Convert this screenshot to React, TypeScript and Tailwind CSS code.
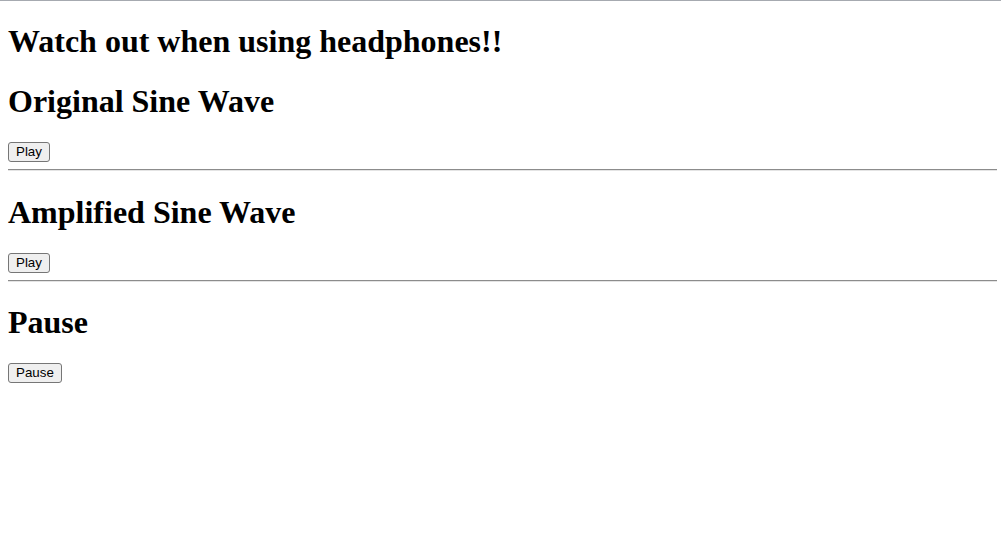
import React from "react";

const serif = "font-['Liberation_Serif','Times_New_Roman',serif]";

function Btn({ label }: { label: string }) {
  return (
    <button className="h-[20px] shrink-0 rounded-[3px] border border-[#767676] bg-[#efefef] px-[7px] font-['Liberation_Sans',Arial,sans-serif] text-[13.33px] leading-[16px] text-black">
      {label}
    </button>
  );
}

function Rule() {
  return <hr className="my-[8px] border-0 border-t border-b border-t-[#8c8c8c] border-b-[#e4e4e4]" />;
}

function Heading({ children }: { children: React.ReactNode }) {
  return (
    <h1 className={`${serif} my-[21.44px] text-[32px] font-bold leading-[38.5px] text-black`}>
      {children}
    </h1>
  );
}

function ButtonRow({ label }: { label: string }) {
  return (
    <div className="flex h-[19px] items-start">
      <Btn label={label} />
    </div>
  );
}

export default function App() {
  return (
    <div className="min-h-screen bg-white">
      <div className="h-px bg-[#a6aab0]" />
      <div className="flow-root pl-2 pr-1">
        <Heading>Watch out when using headphones!!</Heading>
        <Heading>Original Sine Wave</Heading>
        <ButtonRow label="Play" />
        <Rule />
        <Heading>Amplified Sine Wave</Heading>
        <ButtonRow label="Play" />
        <Rule />
        <Heading>Pause</Heading>
        <ButtonRow label="Pause" />
      </div>
    </div>
  );
}
